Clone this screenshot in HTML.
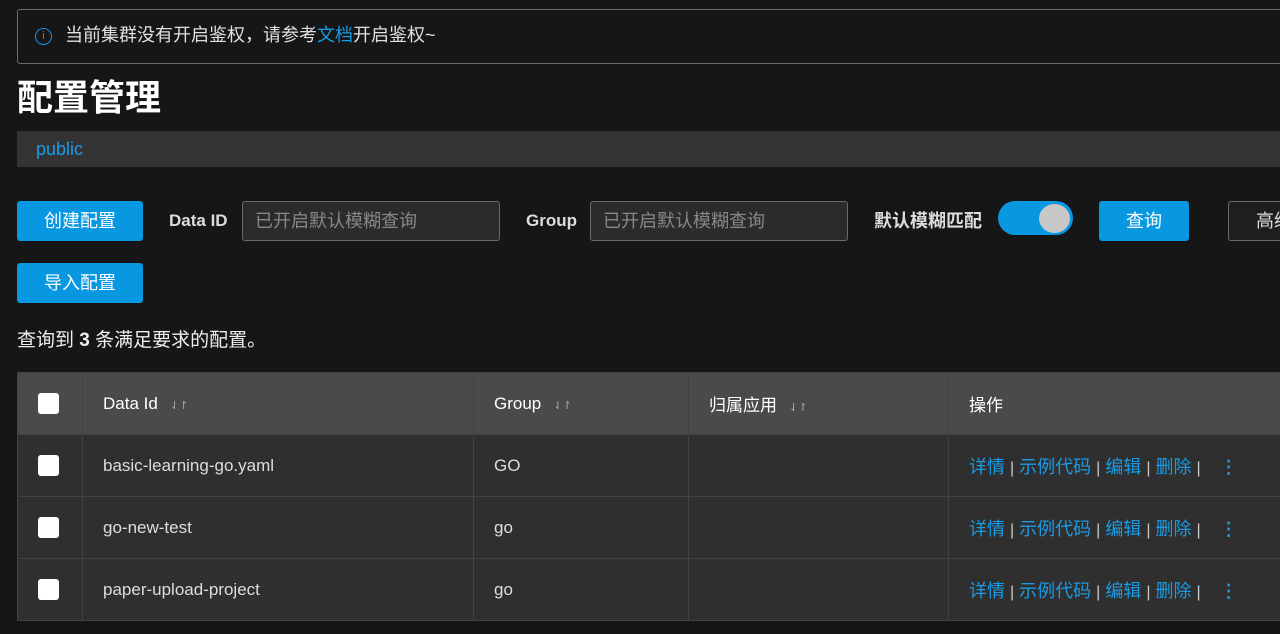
<!DOCTYPE html>
<html><head><meta charset="utf-8"><style>
*{box-sizing:border-box;margin:0;padding:0}
body{width:1280px;height:634px;overflow:hidden;background:#161616;font-family:"Liberation Sans","Noto Sans CJK SC",sans-serif;color:#fff;position:relative}
.abs{position:absolute}
.alert{left:17px;top:9px;width:1290px;height:55px;border:1px solid #6b6b6b;border-radius:3px;font-size:18px;color:#e0e0e0;line-height:51px;padding-left:47px}
.alert a{color:#1a9be6}
.icon{left:35px;top:28px;width:17px;height:17px;border:1.3px solid #1a8fe0;border-radius:50%;color:#1a8fe0;font-size:11px;line-height:14px;text-align:center}
h1{left:17px;top:76px;font-size:36px;font-weight:bold;line-height:44px}
.ns{left:17px;top:131px;width:1270px;height:36px;background:#333;color:#1a9be6;font-size:18px;line-height:36px;padding-left:19px}
.btn{background:#0898e2;color:#fff;font-size:18px;text-align:center;line-height:40px;border-radius:3px;height:40px}
.lbl{font-size:17px;font-weight:bold;color:#ddd;line-height:40px}
.inp{height:40px;border:1px solid #6a6a6a;border-radius:3px;background:#2b2b2b;color:#888;font-size:18px;line-height:38px;padding-left:12px}
.tog{left:998px;top:201px;width:75px;height:34px;background:#0898e2;border-radius:17px}
.tog i{position:absolute;right:3px;top:3px;width:31px;height:29px;border-radius:50%;background:#c8c8c8}
table{position:absolute;left:17px;top:372px;border-collapse:collapse;width:1290px}
td,th{border:1px solid #424242;height:62px;font-size:17px;text-align:left;padding-left:20px;font-weight:normal}
th{background:#4a4a4a;color:#fff}
td{background:#2f2f2f;color:#ddd}
.cb{display:inline-block;width:21px;height:21px;background:#fff;border-radius:3px;vertical-align:middle}
.s{color:#aaa;font-size:11px;margin-left:12px}
.op{font-size:18px}
.op a{color:#1a9be6}.op b{color:#ccc;font-weight:normal;margin:0 5px;font-size:16px}
.dots{color:#1a9be6;font-weight:bold;margin-left:14px}
</style></head><body>
<div class="abs alert">当前集群没有开启鉴权，请参考<a>文档</a>开启鉴权~</div>
<div class="abs icon">i</div>
<h1 class="abs">配置管理</h1>
<div class="abs ns">public</div>
<div class="abs btn" style="left:17px;top:201px;width:126px">创建配置</div>
<div class="abs lbl" style="left:169px;top:201px">Data ID</div>
<div class="abs inp" style="left:242px;top:201px;width:258px">已开启默认模糊查询</div>
<div class="abs lbl" style="left:526px;top:201px">Group</div>
<div class="abs inp" style="left:590px;top:201px;width:258px">已开启默认模糊查询</div>
<div class="abs lbl" style="left:874px;top:201px;font-size:18px">默认模糊匹配</div>
<div class="abs tog"><i></i></div>
<div class="abs btn" style="left:1099px;top:201px;width:90px">查询</div>
<div class="abs inp" style="left:1228px;top:201px;width:80px;color:#ddd;background:#1e1e1e;padding-left:27px">高级</div>
<div class="abs btn" style="left:17px;top:263px;width:126px">导入配置</div>
<div class="abs" style="left:17px;top:325px;font-size:19px;color:#eee">查询到 <b>3</b> 条满足要求的配置。</div>
<table>
<tr><th style="width:65px"><span class="cb"></span></th><th style="width:391px">Data Id<span class="s">⇃↾</span></th><th style="width:215px">Group<span class="s">⇃↾</span></th><th style="width:260px">归属应用<span class="s">⇃↾</span></th><th>操作</th></tr>
<tr><td><span class="cb"></span></td><td>basic-learning-go.yaml</td><td>GO</td><td></td><td class="op"><a>详情</a><b>|</b><a>示例代码</a><b>|</b><a>编辑</a><b>|</b><a>删除</a><b>|</b><span class="dots">⋮</span></td></tr>
<tr><td><span class="cb"></span></td><td>go-new-test</td><td>go</td><td></td><td class="op"><a>详情</a><b>|</b><a>示例代码</a><b>|</b><a>编辑</a><b>|</b><a>删除</a><b>|</b><span class="dots">⋮</span></td></tr>
<tr><td><span class="cb"></span></td><td>paper-upload-project</td><td>go</td><td></td><td class="op"><a>详情</a><b>|</b><a>示例代码</a><b>|</b><a>编辑</a><b>|</b><a>删除</a><b>|</b><span class="dots">⋮</span></td></tr>
</table>
</body></html>
